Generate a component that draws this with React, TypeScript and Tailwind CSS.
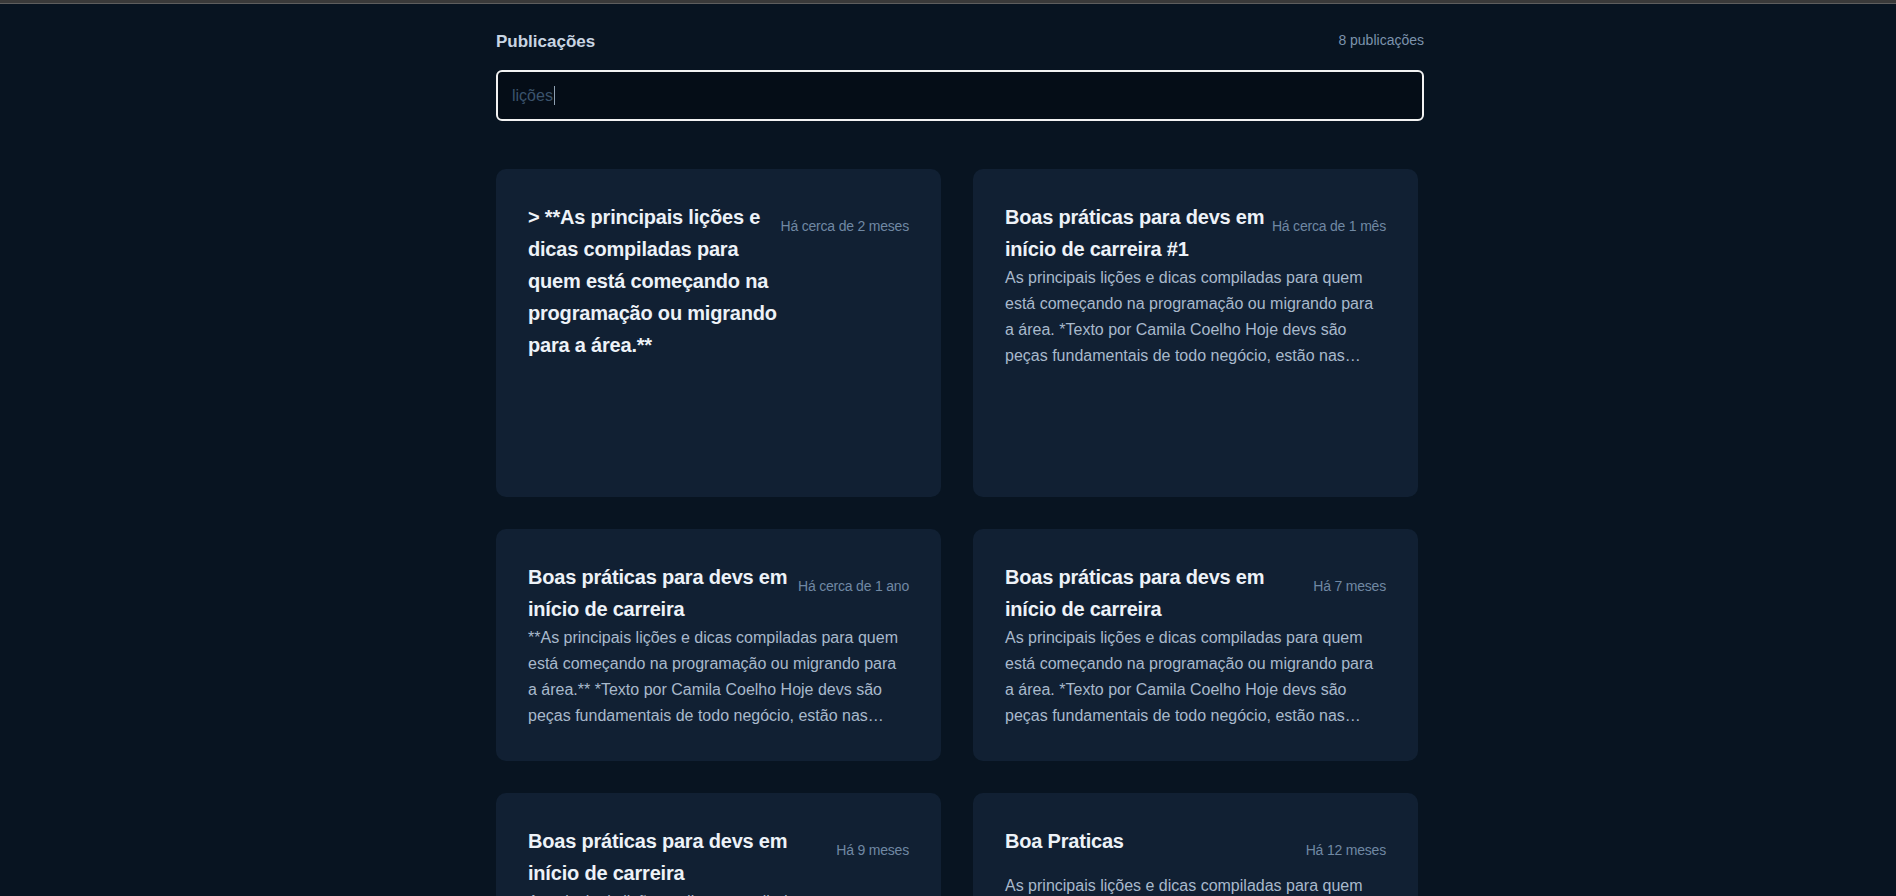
import React from "react";

type Post = {
  title: string[];
  date: string;
  desc: string[];
};

const descA = [
  "As principais lições e dicas compiladas para quem",
  "está começando na programação ou migrando para",
  "a área. *Texto por Camila Coelho Hoje devs são",
  "peças fundamentais de todo negócio, estão nas…",
];

const descB = [
  "**As principais lições e dicas compiladas para quem",
  "está começando na programação ou migrando para",
  "a área.** *Texto por Camila Coelho Hoje devs são",
  "peças fundamentais de todo negócio, estão nas…",
];

const posts: Post[] = [
  {
    title: [
      "> **As principais lições e",
      "dicas compiladas para",
      "quem está começando na",
      "programação ou migrando",
      "para a área.**",
    ],
    date: "Há cerca de 2 meses",
    desc: [],
  },
  {
    title: ["Boas práticas para devs em", "início de carreira #1"],
    date: "Há cerca de 1 mês",
    desc: descA,
  },
  {
    title: ["Boas práticas para devs em", "início de carreira"],
    date: "Há cerca de 1 ano",
    desc: descB,
  },
  {
    title: ["Boas práticas para devs em", "início de carreira"],
    date: "Há 7 meses",
    desc: descA,
  },
  {
    title: ["Boas práticas para devs em", "início de carreira"],
    date: "Há 9 meses",
    desc: descA,
  },
  {
    title: ["Boa Praticas"],
    date: "Há 12 meses",
    desc: descA,
  },
];

function Card({ post }: { post: Post }) {
  return (
    <article className="rounded-[10px] bg-[#112033] p-8">
      <div className="flex justify-between">
        <h2 className="text-[20px] font-bold leading-8 tracking-[-0.2px] text-[#edf2f8]">
          {post.title.map((l, i) => (
            <span key={i} className="block whitespace-nowrap">
              {l}
            </span>
          ))}
        </h2>
        <span className="h-12 shrink-0 whitespace-nowrap pt-[15px] text-[14px] leading-5 tracking-[-0.2px] text-[#7088a3]">
          {post.date}
        </span>
      </div>
      {post.desc.length === 0 ? (
        <div className="h-[104px]" />
      ) : (
        <p className="text-[16px] leading-[26px] text-[#a8b9cc]">
          {post.desc.map((l, i) => (
            <span key={i} className="block whitespace-nowrap">
              {l}
            </span>
          ))}
        </p>
      )}
    </article>
  );
}

export default function App() {
  return (
    <div
      className="min-h-screen bg-[#081421]"
      style={{ fontFamily: '"Liberation Sans", Arial, sans-serif' }}
    >
      <div className="h-[3px] bg-[#3a3a3a]" />
      <div className="h-px bg-[#5e5e5e]" />
      <div className="pl-6">
        <main className="mx-auto w-[928px] pt-[26px] pb-16">
          <div className="flex items-start justify-between">
            <h1 className="text-[17px] font-bold leading-6 text-[#c8d5e3]">
              Publicações
            </h1>
            <span className="text-[14px] leading-5 text-[#7c93ac]">
              8 publicações
            </span>
          </div>
          <div className="mt-4 flex h-[51px] items-center rounded-md border-2 border-[#f2f2f2] bg-[#050d17] px-[14px]">
            <span className="text-[16px] text-[#3b536c]">lições</span>
            <span className="ml-px h-[19px] w-px bg-[#8fa0b2]" />
          </div>
          <section className="mt-[48px] grid grid-cols-[445px_445px] gap-x-8 gap-y-8">
            {posts.map((p, i) => (
              <Card key={i} post={p} />
            ))}
          </section>
        </main>
      </div>
    </div>
  );
}
